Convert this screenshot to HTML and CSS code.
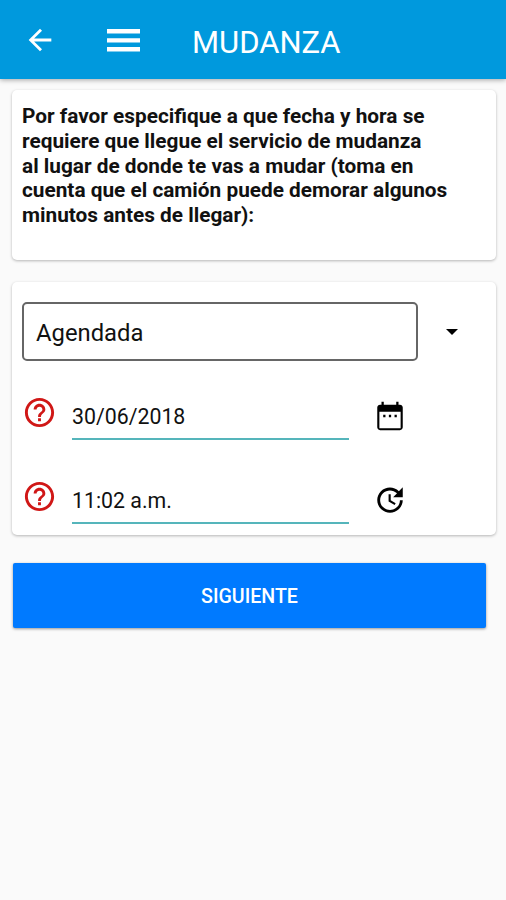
FILE: index.html
```
<!DOCTYPE html>
<html lang="es">
<head>
  <meta charset="UTF-8">
  <title>Mudanza</title>
  <link rel="stylesheet" href="styles.css">
</head>
<body>

  <header class="toolbar">
    <svg class="icon-back" viewBox="0 0 24 24"><path d="M20 11H7.83l5.59-5.59L12 4l-8 8 8 8 1.41-1.41L7.83 13H20v-2z"/></svg>
    <svg class="icon-menu" viewBox="0 0 33 23"><path d="M0 0h33v4.6H0zM0 9.2h33v4.2H0zM0 18h33v4.4H0z"/></svg>
    <h1>MUDANZA</h1>
  </header>

  <main class="content">
    <section class="card intro">
      <p>Por favor especifique a que fecha y hora se<br>
      requiere que llegue el servicio de mudanza<br>
      al lugar de donde te vas a mudar (toma en<br>
      cuenta que el camión puede demorar algunos<br>
      minutos antes de llegar):</p>
    </section>

    <section class="card form">
      <div class="select-row">
        <div class="select">Agendada</div>
        <svg class="caret" viewBox="0 0 12 6"><path d="M0 0h12L6 6z"/></svg>
      </div>

      <div class="field">
        <svg class="icon-help" viewBox="0 0 24 24"><path d="M11 18h2v-2h-2v2zm1-16C6.48 2 2 6.48 2 12s4.48 10 10 10 10-4.48 10-10S17.52 2 12 2zm0 18c-4.41 0-8-3.59-8-8s3.59-8 8-8 8 3.59 8 8-3.59 8-8 8zm0-14c-2.21 0-4 1.79-4 4h2c0-1.1.9-2 2-2s2 .9 2 2c0 2-3 1.75-3 5h2c0-2.25 3-2.5 3-5 0-2.21-1.79-4-4-4z"/></svg>
        <div class="input">30/06/2018</div>
        <svg class="icon-pick" viewBox="0 0 24 24"><path d="M8.8 11.2H7.2v1.6h1.6v-1.6zm4 0h-1.6v1.6h1.6v-1.6zm4 0h-1.6v1.6h1.6v-1.6zM19 4h-1V2h-1.6v2H7.6V2H6v2H5c-1.11 0-1.99.9-1.99 2L3 20c0 1.1.89 2 2 2h14c1.1 0 2-.9 2-2V6c0-1.1-.9-2-2-2zm.5 16.6h-15V9h15v11.6z"/></svg>
      </div>

      <div class="field">
        <svg class="icon-help" viewBox="0 0 24 24"><path d="M11 18h2v-2h-2v2zm1-16C6.48 2 2 6.48 2 12s4.48 10 10 10 10-4.48 10-10S17.52 2 12 2zm0 18c-4.41 0-8-3.59-8-8s3.59-8 8-8 8 3.59 8 8-3.59 8-8 8zm0-14c-2.21 0-4 1.79-4 4h2c0-1.1.9-2 2-2s2 .9 2 2c0 2-3 1.75-3 5h2c0-2.25 3-2.5 3-5 0-2.21-1.79-4-4-4z"/></svg>
        <div class="input">11:02 a.m.</div>
        <svg class="icon-pick" viewBox="0 0 24 24"><path d="M21 10.12h-6.78l2.74-2.82c-2.73-2.7-7.15-2.8-9.88-.1-2.73 2.71-2.73 7.08 0 9.79s7.15 2.71 9.88 0C18.32 15.65 19 14.08 19 12.1h2c0 1.98-.88 4.55-2.64 6.29-3.51 3.48-9.21 3.48-12.72 0-3.5-3.47-3.53-9.11-.02-12.58s9.14-3.47 12.65 0L21 3v7.12zM12.5 8v4.25l3.5 2.08-.72 1.21L11 13V8h1.5z"/></svg>
      </div>
    </section>

    <button class="next">SIGUIENTE</button>
  </main>

</body>
</html>
```
FILE: styles.css
```
:root {
  --primary: #0099dd;
  --action: #007aff;
  --accent: #55b5bb;
  --danger: #d01716;
}

* {
  box-sizing: border-box;
}

body {
  margin: 0;
  min-height: 100vh;
  font-family: Roboto, sans-serif;
  background-color: #fafafa;
  color: #111;
}

svg {
  display: block;
  flex: none;
  fill: currentColor;
}

.toolbar {
  display: flex;
  align-items: center;
  height: 79px;
  padding: 1px 0 0 23px;
  background-color: var(--primary);
  color: #fff;
  box-shadow: 0 1px 5px rgba(0,0,0,0.35);
}

.icon-back {
  width: 34px;
  height: 34px;
}

.icon-menu {
  width: 33px;
  height: 23px;
  margin-left: 50px;
}

.toolbar h1 {
  margin: 4px 0 0 52px;
  font-size: 31px;
  font-weight: 400;
}

.content {
  padding: 11px 10px 0 12px;
}

.card {
  background-color: #fff;
  border-radius: 5px;
  box-shadow: 0 1px 3px rgba(0,0,0,0.28);
}

.intro {
  height: 170px;
  padding: 14px 10px;
}

.intro p {
  margin: 0;
  font-size: 20.8px;
  font-weight: 700;
  line-height: 24.8px;
  white-space: nowrap;
}

.form {
  height: 253px;
  margin-top: 22px;
  padding: 20px 10px 0;
}

.select-row {
  display: flex;
  align-items: center;
}

.select {
  width: 396px;
  height: 59px;
  padding-left: 12px;
  border: 2px solid #666;
  border-radius: 5px;
  font-size: 23.8px;
  line-height: 58px;
}

.caret {
  width: 12px;
  height: 6px;
  margin-left: 28px;
  color: #000;
}

.field {
  display: flex;
  align-items: flex-start;
  margin-top: 34px;
  height: 45px;
}

.field + .field {
  margin-top: 39px;
}

.icon-help {
  width: 35px;
  height: 35px;
  color: var(--danger);
}

.input {
  width: 277px;
  height: 45px;
  margin-left: 15px;
  border-bottom: 2px solid var(--accent);
  font-size: 21.3px;
  line-height: 43px;
}

.icon-pick {
  width: 34px;
  height: 34px;
  margin: 4px 0 0 24px;
  color: #000;
}

.next {
  display: block;
  width: 473px;
  height: 65px;
  margin: 28px 0 0 1px;
  padding: 2px 0 0;
  border: none;
  border-radius: 2px;
  background-color: var(--action);
  color: #fff;
  font-family: inherit;
  font-size: 19.6px;
  font-weight: 500;
  box-shadow: 0 1px 3px rgba(0,0,0,0.4);
}
```
